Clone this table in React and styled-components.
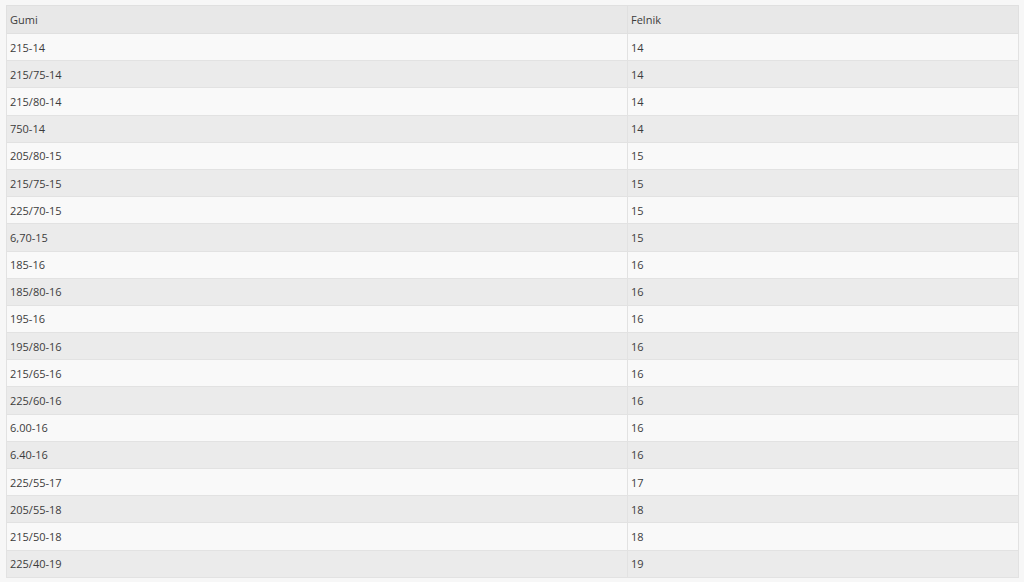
import React from "react";
import styled, { createGlobalStyle } from "styled-components";

const GlobalStyle = createGlobalStyle`
  html, body {
    margin: 0;
    padding: 0;
    background: #f7f7f7;
  }
  body {
    font-family: "Open Sans", "Noto Sans", sans-serif;
    color: #3c3c3c;
  }
`;

const Page = styled.div`
  padding: 5px 5px 5px 6px;
`;

const Table = styled.table`
  width: 1013px;
  table-layout: fixed;
  border-collapse: collapse;
  font-size: 11px;
  border: 1px solid #e6e6e6;
`;

const Head = styled.th`
  background: #e8e8e8;
  font-weight: 400;
  text-align: left;
  height: 27px;
  padding: 0 3px;
  border: 1px solid #e0e0e0;
`;

const Row = styled.tr`
  background: ${({ odd }) => (odd ? "#f9f9f9" : "#ebebeb")};
`;

const Cell = styled.td`
  height: 26.2px;
  padding: 0 3px;
  border: 1px solid #e2e2e2;
`;

const rows = [
  ["215-14", "14"],
  ["215/75-14", "14"],
  ["215/80-14", "14"],
  ["750-14", "14"],
  ["205/80-15", "15"],
  ["215/75-15", "15"],
  ["225/70-15", "15"],
  ["6,70-15", "15"],
  ["185-16", "16"],
  ["185/80-16", "16"],
  ["195-16", "16"],
  ["195/80-16", "16"],
  ["215/65-16", "16"],
  ["225/60-16", "16"],
  ["6.00-16", "16"],
  ["6.40-16", "16"],
  ["225/55-17", "17"],
  ["205/55-18", "18"],
  ["215/50-18", "18"],
  ["225/40-19", "19"],
];

export default function App() {
  return (
    <Page>
      <GlobalStyle />
      <Table>
        <colgroup>
          <col style={{ width: 621 }} />
          <col />
        </colgroup>
        <thead>
          <tr>
            <Head>Gumi</Head>
            <Head>Felnik</Head>
          </tr>
        </thead>
        <tbody>
          {rows.map(([gumi, felnik], i) => (
            <Row key={gumi} odd={i % 2 === 0}>
              <Cell>{gumi}</Cell>
              <Cell>{felnik}</Cell>
            </Row>
          ))}
        </tbody>
      </Table>
    </Page>
  );
}
